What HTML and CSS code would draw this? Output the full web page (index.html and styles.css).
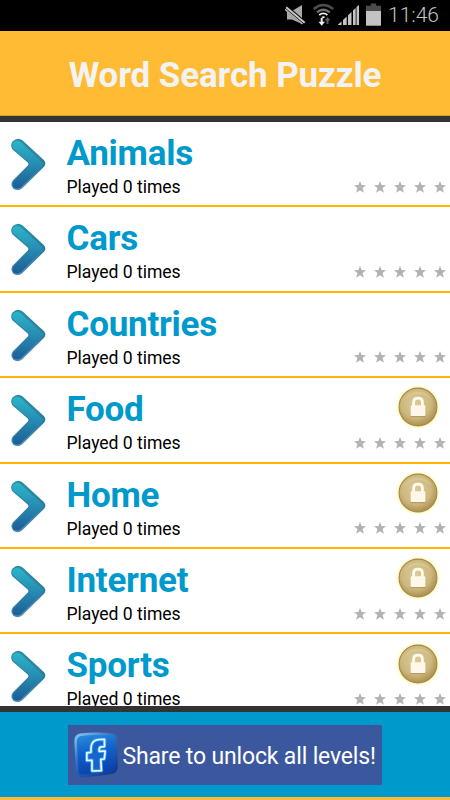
FILE: index.html
```html
<!DOCTYPE html>
<html lang="en">
<head>
<meta charset="utf-8">
<title>Word Search Puzzle</title>
<link rel="stylesheet" href="styles.css">
</head>
<body>
<svg class="defs" aria-hidden="true">
  <defs>
    <linearGradient id="g-arrow" x1="0" y1="0" x2="0" y2="1">
      <stop offset="0" stop-color="#2cb5cb"/><stop offset=".45" stop-color="#278fb4"/><stop offset="1" stop-color="#1d5c96"/>
    </linearGradient>
    <linearGradient id="g-edge" x1="0" y1="0" x2="0" y2="1">
      <stop offset="0" stop-color="#2a8f9f"/><stop offset=".5" stop-color="#2b7c9d"/><stop offset="1" stop-color="#5590b6"/>
    </linearGradient>
    <radialGradient id="g-lock" cx=".45" cy=".4" r=".6">
      <stop offset="0" stop-color="#dccb98"/><stop offset=".65" stop-color="#cdb87e"/><stop offset="1" stop-color="#ac8f52"/>
    </radialGradient>
    <radialGradient id="g-glow">
      <stop offset=".9" stop-color="#fffabd"/><stop offset="1" stop-color="#fffcd2" stop-opacity=".3"/>
    </radialGradient>
    <linearGradient id="g-fb" x1="0" y1="0" x2=".2" y2="1">
      <stop offset="0" stop-color="#2b8ddd"/><stop offset=".45" stop-color="#1263cb"/><stop offset="1" stop-color="#0b43ad"/>
    </linearGradient>
    <linearGradient id="g-rim" x1="0" y1="0" x2=".7" y2="1">
      <stop offset="0" stop-color="#8ed0f5"/><stop offset=".45" stop-color="#2d74c4"/><stop offset="1" stop-color="#123c91"/>
    </linearGradient>
  </defs>
  <symbol id="arrow" viewBox="0 0 36 54">
    <path d="M1.6 3.3Q6.8-1.6 12 2.4L34 22.6Q36.8 26 34 29.2L11.6 51.4Q7.2 55 2.3 52Q-1.2 47.8 1.8 43.4L17.3 28Q18.6 26.5 17.2 25L1.4 11.2Q-1.2 7 1.6 3.3Z" fill="url(#g-edge)"/>
    <path d="M2 4.5Q6 .6 10.2 4.2L31.9 24.2Q33.8 26.4 31.9 28.6L10.1 50.4Q6.5 53 2.8 50.6Q.2 47.4 2.8 44L18.6 28.4Q20 26.5 18.4 24.6L2.5 10.7Q.1 7.4 2 4.5Z" fill="url(#g-arrow)"/>
  </symbol>
  <symbol id="star" viewBox="0 0 12 12">
    <path d="M6 0 7.6 4 12 4.2 8.6 7.1 9.9 11.8 6 9.3 2.1 11.8 3.4 7.1 0 4.2 4.4 4Z" fill="#b3b3b3"/>
  </symbol>
  <symbol id="lock" viewBox="0 0 44 44">
    <circle cx="22" cy="22" r="22" fill="url(#g-glow)"/>
    <circle cx="22" cy="22" r="18.9" fill="url(#g-lock)" stroke="#a4884d" stroke-width="1.1"/>
    <path d="M7 17A16 16 0 0 1 37 17Q31 9 22 9T7 17Z" fill="#fff6ce" opacity=".18"/>
    <path d="M14.5 31.5H29.5" stroke="#9e8346" stroke-width="1.4" opacity=".5"/>
    <path d="M17.6 21V17.2Q17.6 13.2 22 13.2T26.4 17.2V21" fill="none" stroke="#fffaf0" stroke-width="2.8"/>
    <rect x="14.7" y="20.2" width="14.6" height="10.8" rx="1" fill="#fff7e9"/>
  </symbol>
  <symbol id="stars" viewBox="0 0 92 12">
    <use href="#star" x="0" width="12" height="12"/><use href="#star" x="20" width="12" height="12"/><use href="#star" x="40" width="12" height="12"/><use href="#star" x="60" width="12" height="12"/><use href="#star" x="80" width="12" height="12"/>
  </symbol>
</svg>

<div class="statusbar">
  <svg class="status-icons" viewBox="0 0 100 31">
    <path d="M2 11H7L17 5V24L7 19.5H2Z" fill="#aaa"/>
    <path d="M1 7.6 19.5 23.4" stroke="#000" stroke-width="5"/>
    <path d="M0 9.3 17.5 24" stroke="#b8b8b8" stroke-width="1.6"/>
    <path d="M1.2 7.2 19.7 22.8" stroke="#c8c8c8" stroke-width="2"/>
    <path d="M53 25V24.5L56.5 21.5V25ZM58 25V20L61.7 16.5V25ZM63 25V15.3L66.5 12V25ZM68 25V10.5L70.7 8V25ZM71.5 25V7L74 5V25Z" fill="#c3c3c3"/>
    <path d="M28.6 9Q38.3 1 48.2 9" fill="none" stroke="#4c4c4c" stroke-width="2.6"/>
    <path d="M32 12.4Q38.3 7.2 44.8 12.4" fill="none" stroke="#717171" stroke-width="2.3"/>
    <path d="M34.2 15Q38.3 11.7 42.4 15" fill="none" stroke="#eee" stroke-width="1.8"/>
    <path d="M36.3 17Q38.3 15.3 40.3 17L38.3 18.6Z" fill="#eee"/>
    <path d="M36.7 18V22" stroke="#eee" stroke-width="2"/>
    <path d="M33.5 21.7H40L36.7 25.7Z" fill="#eee"/>
    <path d="M42.5 24V20" stroke="#5c5c5c" stroke-width="2"/>
    <path d="M39.6 20.5 42.5 17 45.4 20.5Z" fill="#5c5c5c"/>
    <path d="M81 5.7H85.8V3.4H91.2V5.7H96V11H81Z" fill="#4b4b4b"/>
    <path d="M81 11H96V25.7H81Z" fill="#c3c3c3"/>
  </svg>
  <span class="clock">11:46</span>
</div>
<header class="header"><h1 class="title">Word Search Puzzle</h1></header>

<main class="list">
  <section class="row">
    <svg class="arrow"><use href="#arrow"/></svg>
    <div class="info"><h2 class="name">Animals</h2><p class="played">Played 0 times</p></div>
    <div class="side"><svg class="stars"><use href="#stars"/></svg></div>
  </section>
  <section class="row">
    <svg class="arrow"><use href="#arrow"/></svg>
    <div class="info"><h2 class="name">Cars</h2><p class="played">Played 0 times</p></div>
    <div class="side"><svg class="stars"><use href="#stars"/></svg></div>
  </section>
  <section class="row">
    <svg class="arrow"><use href="#arrow"/></svg>
    <div class="info"><h2 class="name">Countries</h2><p class="played">Played 0 times</p></div>
    <div class="side"><svg class="stars"><use href="#stars"/></svg></div>
  </section>
  <section class="row">
    <svg class="arrow"><use href="#arrow"/></svg>
    <div class="info"><h2 class="name">Food</h2><p class="played">Played 0 times</p></div>
    <div class="side"><svg class="lock"><use href="#lock"/></svg><svg class="stars"><use href="#stars"/></svg></div>
  </section>
  <section class="row">
    <svg class="arrow"><use href="#arrow"/></svg>
    <div class="info"><h2 class="name">Home</h2><p class="played">Played 0 times</p></div>
    <div class="side"><svg class="lock"><use href="#lock"/></svg><svg class="stars"><use href="#stars"/></svg></div>
  </section>
  <section class="row">
    <svg class="arrow"><use href="#arrow"/></svg>
    <div class="info"><h2 class="name">Internet</h2><p class="played">Played 0 times</p></div>
    <div class="side"><svg class="lock"><use href="#lock"/></svg><svg class="stars"><use href="#stars"/></svg></div>
  </section>
  <section class="row">
    <svg class="arrow"><use href="#arrow"/></svg>
    <div class="info"><h2 class="name">Sports</h2><p class="played">Played 0 times</p></div>
    <div class="side"><svg class="lock"><use href="#lock"/></svg><svg class="stars"><use href="#stars"/></svg></div>
  </section>
</main>

<footer class="footer">
  <button class="share">
    <svg class="fb" viewBox="0 0 44 46">
      <path d="M6 1.5Q22-.5 39 1.5Q43.5 2.5 43.2 7L43.8 35Q43.5 41 38 42Q24 44 8 45.5Q2.5 45.5 1.8 40L.3 9Q.2 3 6 1.5Z" fill="url(#g-rim)"/>
      <path d="M7 4Q22 2 37.5 3.7Q40.5 4.5 40.5 8L40.8 34Q40.5 38 37 39Q23 41.5 8.5 42.5Q5 42.5 4.5 39L2.8 10Q2.8 5 7 4Z" fill="url(#g-fb)"/>
      <path id="f" d="M18 39V28.3L12.8 28.5V20.8L17 20.3V16Q17.3 8 25 7.5L30.5 7.3V14.6L27.5 14.8Q25.2 15 25.2 17.3V19.3L31.2 19L30.3 27L26.8 27.3L27.4 38.6Z" fill="#1765c8" stroke="#2d9cff" stroke-width="3.4" stroke-linejoin="round"/>
      <path d="M18 39V28.3L12.8 28.5V20.8L17 20.3V16Q17.3 8 25 7.5L30.5 7.3V14.6L27.5 14.8Q25.2 15 25.2 17.3V19.3L31.2 19L30.3 27L26.8 27.3L27.4 38.6Z" fill="none" stroke="#f4faff" stroke-width="1.7" stroke-linejoin="round"/>
    </svg>
    <span class="share-text">Share to unlock all levels!</span>
  </button>
</footer>
</body>
</html>
```
FILE: styles.css
```css
* { box-sizing: border-box; }
body {
  margin: 0;
  width: 450px;
  height: 800px;
  display: flex;
  flex-direction: column;
  overflow: hidden;
  background: #fff;
  font-family: Roboto, "Liberation Sans", sans-serif;
}
.defs { position: absolute; width: 0; height: 0; }
h1, h2, p { margin: 0; }
.statusbar {
  flex: none;
  height: 31px;
  background: #000;
  display: flex;
  align-items: center;
  padding-left: 285px;
}
.status-icons { width: 100px; height: 31px; flex: none; }
.clock {
  margin-left: 3px;
  color: #c4c4c4;
  font-size: 21px;
  line-height: 31px;
  font-weight: 300;
}
.header {
  flex: none;
  height: 91px;
  background: #fb3;
  border-bottom: 6px solid #333;
  display: flex;
  align-items: center;
  justify-content: center;
  box-shadow: inset 0 -1px #d99d28;
}
.title {
  color: #f3f3f3;
  font-size: 35px;
  line-height: 40px;
  font-weight: 700;
  letter-spacing: -.12px;
  white-space: nowrap;
  padding-top: 4px;
}
.list { flex: 1; min-height: 0; overflow: hidden; }
.row {
  height: 85.4px;
  border-bottom: 2px solid #ffb400;
  display: flex;
  padding-left: 11px;
  padding-right: 4px;
}
.arrow { width: 35px; height: 53px; margin-top: 16px; flex: none; }
.info { margin-left: 20.5px; padding-top: 11px; flex: 1; }
.name {
  color: #09c;
  font-size: 35px;
  line-height: 41px;
  font-weight: 700;
  letter-spacing: -.25px;
}
.played {
  color: #000;
  font-size: 17.6px;
  line-height: 20px;
  letter-spacing: -.05px;
  margin-top: 3px;
}
.side {
  width: 92px;
  display: flex;
  flex-direction: column;
  justify-content: flex-end;
  padding-bottom: 12.7px;
}
.lock { width: 44px; height: 44px; margin: 0 0 7.4px 42px; flex: none; }
.stars { width: 92px; height: 12px; flex: none; }
.footer {
  flex: none;
  height: 94px;
  background: #09c;
  border-top: 6px solid #333;
  border-bottom: 3px solid #fb3;
  display: flex;
  justify-content: center;
  align-items: flex-start;
  padding-top: 13px;
}
.share {
  width: 314px;
  height: 60px;
  border: 0;
  background: #3b589e;
  display: flex;
  align-items: center;
  padding: 0 0 0 6px;
  font-family: inherit;
}
.fb { width: 44px; height: 46px; flex: none; }
.share-text {
  margin-left: 4.5px;
  padding-top: 3px;
  color: #fff;
  font-size: 23px;
  line-height: 30px;
  letter-spacing: -.16px;
  white-space: nowrap;
}
```
